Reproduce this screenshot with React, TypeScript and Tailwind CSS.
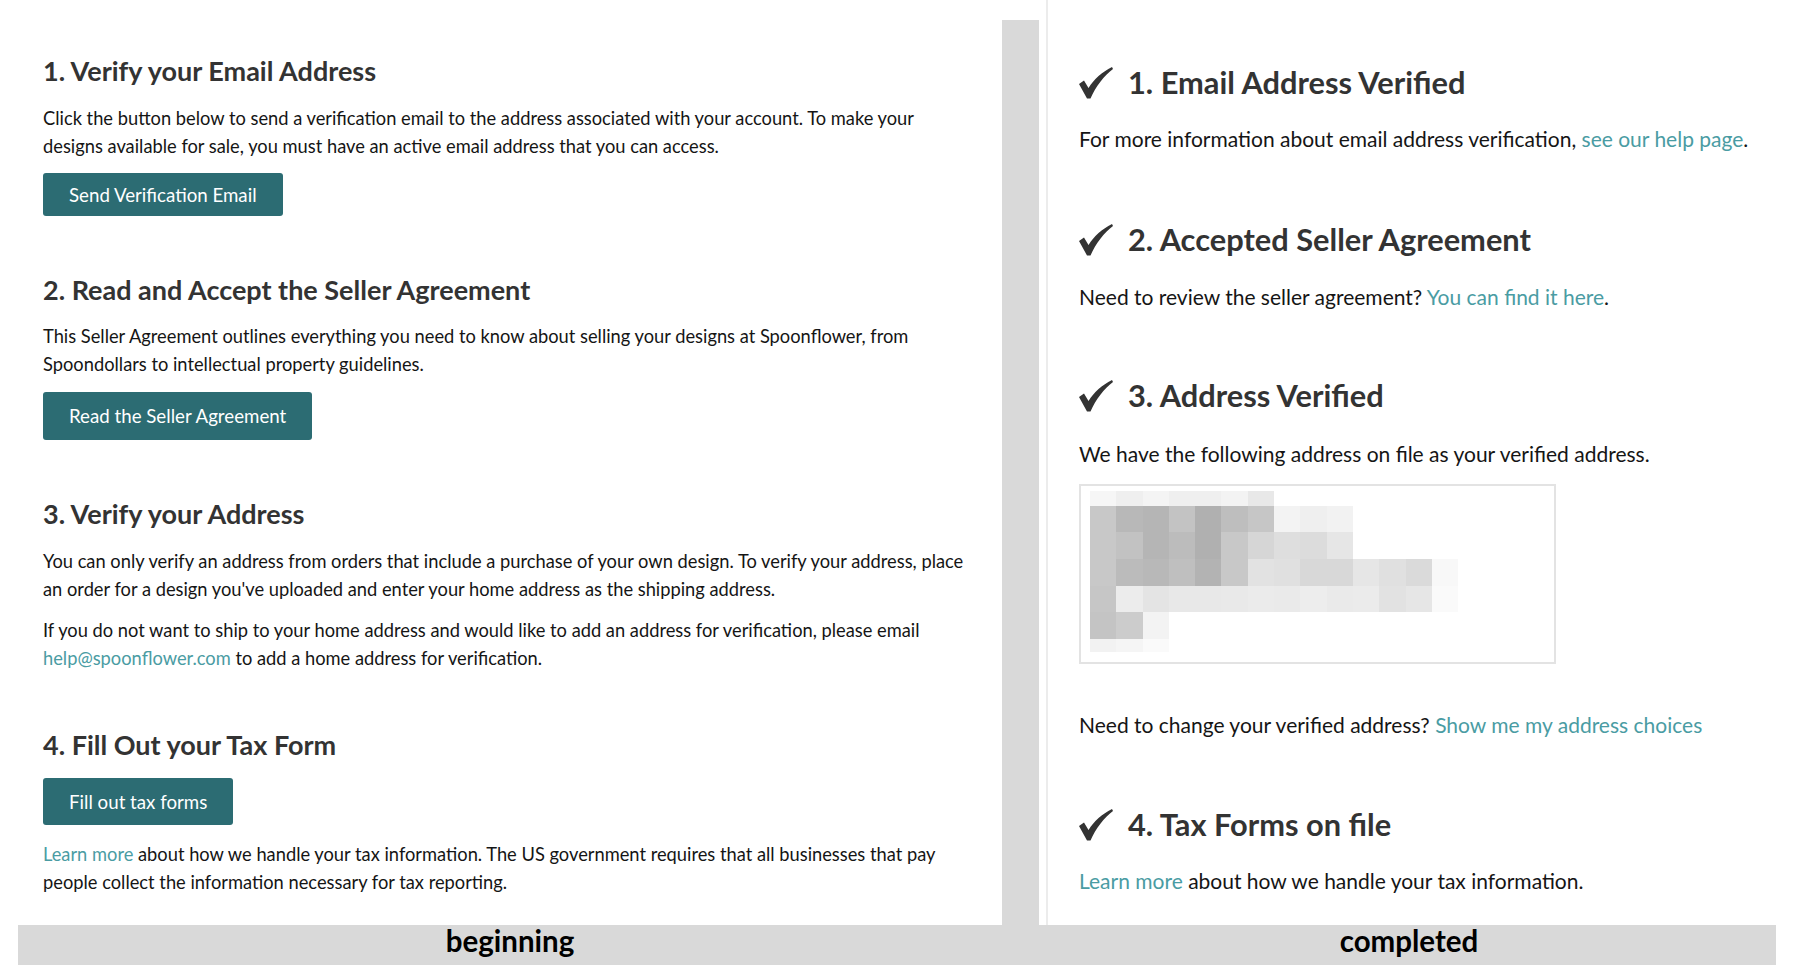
import React from "react";

const LINK = "text-[#4a9ca3]";

type Row = { h: string; cells: string[] };

// pixelated (redacted) address block
const MOSAIC: Row[] = [
  { h: "h-[15px]", cells: ["bg-[#f6f6f6]", "bg-[#efefef]", "bg-[#f4f4f4]", "bg-[#efefef]", "bg-[#efefef]", "bg-[#f3f3f3]", "bg-[#e8e8e8]"] },
  {
    h: "h-[26px]",
    cells: ["bg-[#c8c8c8]", "bg-[#b8b8b8]", "bg-[#b5b5b5]", "bg-[#c3c3c3]", "bg-[#b0b0b0]", "bg-[#bebebe]", "bg-[#c6c6c6]", "bg-[#f3f3f3]", "bg-[#efefef]", "bg-[#f2f2f2]"],
  },
  {
    h: "h-[27px]",
    cells: ["bg-[#c8c8c8]", "bg-[#c2c2c2]", "bg-[#b5b5b5]", "bg-[#bcbcbc]", "bg-[#b0b0b0]", "bg-[#c8c8c8]", "bg-[#d6d6d6]", "bg-[#dedede]", "bg-[#dcdcdc]", "bg-[#e6e6e6]"],
  },
  {
    h: "h-[27px]",
    cells: [
      "bg-[#c8c8c8]", "bg-[#bbbbbb]", "bg-[#b8b8b8]", "bg-[#bfbfbf]", "bg-[#b3b3b3]", "bg-[#c8c8c8]", "bg-[#e2e2e2]",
      "bg-[#e0e0e0]", "bg-[#d8d8d8]", "bg-[#d8d8d8]", "bg-[#e6e6e6]", "bg-[#e0e0e0]", "bg-[#dadada]", "bg-[#f8f8f8]",
    ],
  },
  {
    h: "h-[26px]",
    cells: [
      "bg-[#c6c6c6]", "bg-[#ececec]", "bg-[#e4e4e4]", "bg-[#e8e8e8]", "bg-[#e8e8e8]", "bg-[#e9e9e9]", "bg-[#ebebeb]",
      "bg-[#eaeaea]", "bg-[#ededed]", "bg-[#eaeaea]", "bg-[#ebebeb]", "bg-[#e2e2e2]", "bg-[#e6e6e6]", "bg-[#fafafa]",
    ],
  },
  { h: "h-[27px]", cells: ["bg-[#c4c4c4]", "bg-[#cccccc]", "bg-[#f3f3f3]"] },
  { h: "h-[13px]", cells: ["bg-[#f2f2f2]", "bg-[#f5f5f5]", "bg-[#fafafa]"] },
];

function Check() {
  return (
    <svg viewBox="0 0 34 32" className="h-[32px] w-[34px] shrink-0 fill-[#333]">
      <path d="M0 17 L5 13.5 L9.5 21 C15 12 23 5 33 0 L34 2 C25 9 17 19 11.5 31.5 L8 31.5 Z" />
    </svg>
  );
}

function LeftHeading({ children, className = "" }: { children: React.ReactNode; className?: string }) {
  return <h2 className={`text-[27px] font-bold leading-[32px] text-[#333] ${className}`}>{children}</h2>;
}

function Btn({ children, className = "" }: { children: React.ReactNode; className?: string }) {
  return (
    <button
      type="button"
      className={`flex items-center rounded-[3px] bg-[#2c6c73] px-[26px] text-[18.7px] text-white ${className}`}
    >
      {children}
    </button>
  );
}

function DoneHeading({ children, className = "" }: { children: React.ReactNode; className?: string }) {
  return (
    <div className={`flex items-center gap-[15px] ${className}`}>
      <Check />
      <h2 className="text-[30.8px] font-bold leading-[36px] text-[#333]">{children}</h2>
    </div>
  );
}

export default function App() {
  return (
    <div className="h-[980px] w-[1800px] overflow-hidden bg-white font-['Lato','Open_Sans',sans-serif] text-[#151515]">
      <div className="flex h-[925px]">
        {/* beginning */}
        <div className="w-[1002px] shrink-0 pl-[43px] pt-[55px] text-[18.3px] leading-[28px]">
          <LeftHeading>1. Verify your Email Address</LeftHeading>
          <p className="mt-[17px] w-[890px]">
            Click the button below to send a verification email to the address associated with your account. To make your
            designs available for sale, you must have an active email address that you can access.
          </p>
          <Btn className="mt-[13px] h-[43px]">Send Verification Email</Btn>

          <LeftHeading className="mt-[58px]">2. Read and Accept the Seller Agreement</LeftHeading>
          <p className="mt-[16px] w-[890px]">
            This Seller Agreement outlines everything you need to know about selling your designs at Spoonflower, from
            Spoondollars to intellectual property guidelines.
          </p>
          <Btn className="mt-[14px] h-[48px]">Read the Seller Agreement</Btn>

          <LeftHeading className="mt-[58px]">3. Verify your Address</LeftHeading>
          <p className="mt-[17px] w-[935px]">
            You can only verify an address from orders that include a purchase of your own design. To verify your address, place
            an order for a design you've uploaded and enter your home address as the shipping address.
          </p>
          <p className="mt-[13px] w-[890px]">
            If you do not want to ship to your home address and would like to add an address for verification, please email{" "}
            <span className={LINK}>help@spoonflower.com</span> to add a home address for verification.
          </p>

          <LeftHeading className="mt-[57px]">4. Fill Out your Tax Form</LeftHeading>
          <Btn className="mt-[17px] h-[47px]">Fill out tax forms</Btn>
          <p className="mt-[15px] w-[910px]">
            <span className={LINK}>Learn more</span> about how we handle your tax information. The US government requires that
            all businesses that pay people collect the information necessary for tax reporting.
          </p>
        </div>

        <div className="mt-[20px] w-[37px] shrink-0 bg-[#d9d9d9]" />

        {/* completed */}
        <div className="ml-[7px] flex-1 border-l-2 border-[#ececec] pl-[31px] pt-[65px] text-[21px] leading-[30px]">
          <DoneHeading>1. Email Address Verified</DoneHeading>
          <p className="mt-[23px]">
            For more information about email address verification, <span className={LINK}>see our help page</span>.
          </p>

          <DoneHeading className="mt-[68px]">2. Accepted Seller Agreement</DoneHeading>
          <p className="mt-[24px]">
            Need to review the seller agreement? <span className={LINK}>You can find it here</span>.
          </p>

          <DoneHeading className="mt-[66px]">3. Address Verified</DoneHeading>
          <p className="mt-[25px]">We have the following address on file as your verified address.</p>
          <div className="mt-[15px] h-[180px] w-[477px] border-2 border-[#e3e3e3] pl-[9px] pt-[5px]">
            {MOSAIC.map((row, i) => (
              <div key={i} className={`flex ${row.h}`}>
                {row.cells.map((c, j) => (
                  <div key={j} className={`w-[26.3px] ${c}`} />
                ))}
              </div>
            ))}
          </div>
          <p className="mt-[46px]">
            Need to change your verified address? <span className={LINK}>Show me my address choices</span>
          </p>

          <DoneHeading className="mt-[67px]">4. Tax Forms on file</DoneHeading>
          <p className="mt-[23px]">
            <span className={LINK}>Learn more</span> about how we handle your tax information.
          </p>
        </div>
      </div>

      <div className="ml-[18px] flex h-[40px] w-[1758px] bg-[#d9d9d9] text-[29.5px] font-bold leading-[31px] text-black">
        <div className="w-[984px] text-center">beginning</div>
        <div className="flex-1 pl-[40px] text-center">completed</div>
      </div>
    </div>
  );
}
